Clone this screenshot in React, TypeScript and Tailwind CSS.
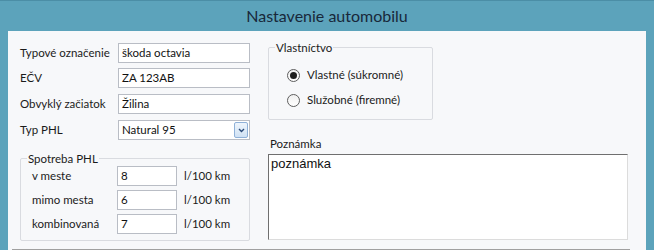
import React from 'react';

const FONT = { fontFamily: 'Lato, "Liberation Sans", sans-serif' };

function TextBox({ value, width }: { value: string; width: string }) {
  return (
    <div
      className={`${width} flex h-[20px] items-center border border-[#b9bdc5] bg-white pl-[3px] text-[11.5px] text-[#111]`}>
      {value}
    </div>
  );
}

function FieldRow({ label, children }: { label: string; children: React.ReactNode }) {
  return (
    <div className="flex h-[20px] items-center">
      <span className="w-[98px] text-[11.5px] text-[#1b1b1b]">{label}</span>
      {children}
    </div>
  );
}

function ComboBox({ value }: { value: string }) {
  return (
    <div className="flex h-[20px] w-[132px] items-center justify-between border border-[#b9bdc5] bg-white pl-[3px] pr-[1px] text-[11.5px] text-[#111]">
      <span>{value}</span>
      <span className="flex h-[16px] w-[14px] items-center justify-center rounded-[2px] border border-[#8fb1d8] bg-gradient-to-b from-[#eef5fc] to-[#cfe1f4]">
        <svg width="7" height="5" viewBox="0 0 7 5">
          <path d="M1 1 L3.5 3.5 L6 1" fill="none" stroke="#2a4a78" strokeWidth="1.4" />
        </svg>
      </span>
    </div>
  );
}

function ConsumptionRow({ label, value }: { label: string; value: string }) {
  return (
    <div className="flex h-[20px] items-center">
      <span className="w-[96px] pl-[11px] text-[11.5px] text-[#1b1b1b]">{label}</span>
      <TextBox value={value} width="w-[60px]" />
      <span className="ml-[7px] text-[11.5px] text-[#1b1b1b]">l/100 km</span>
    </div>
  );
}

function Radio({ label, checked }: { label: string; checked?: boolean }) {
  return (
    <div className="flex h-[14px] items-center">
      <span className="flex h-[13px] w-[13px] items-center justify-center rounded-full border border-[#5e5e5e] bg-gradient-to-b from-[#f0f0f0] to-[#ffffff]">
        {checked && <span className="h-[7px] w-[7px] rounded-full bg-[#1e1e1e]" />}
      </span>
      <span className="ml-[7px] text-[11.5px] text-[#1b1b1b]">{label}</span>
    </div>
  );
}

function GroupTitle({ text }: { text: string }) {
  return (
    <span className="-mt-[8px] ml-[6px] block w-fit bg-[#f7f8fa] px-[1px] text-[11.5px] leading-[16px] text-[#1b1b1b]">
      {text}
    </span>
  );
}

export default function App() {
  return (
    <div className="flex h-[250px] w-[654px] flex-col overflow-hidden bg-[#5ca3bb]" style={FONT}>
      {/* Titulok okna */}
      <div className="flex h-[31px] shrink-0 items-center justify-center border-t border-[#4b8ea6] text-[16px] text-[#18283a]">
        Nastavenie automobilu
      </div>

      <div className="mx-[8px] flex-1 bg-[#f7f8fa] pt-[12px]">
        <div className="flex">
          {/* Ľavý stĺpec */}
          <div className="ml-[12px] flex w-[230px] flex-col">
            <FieldRow label="Typové označenie">
              <TextBox value="škoda octavia" width="w-[132px]" />
            </FieldRow>
            <div className="mt-[5px]">
              <FieldRow label="EČV">
                <TextBox value="ZA 123AB" width="w-[132px]" />
              </FieldRow>
            </div>
            <div className="mt-[6px]">
              <FieldRow label="Obvyklý začiatok">
                <TextBox value="Žilina" width="w-[132px]" />
              </FieldRow>
            </div>
            <div className="mt-[6px]">
              <FieldRow label="Typ PHL">
                <ComboBox value="Natural 95" />
              </FieldRow>
            </div>

            <div className="mt-[18px] flex flex-col rounded-[2px] border border-[#d9dbe0] pb-[6px]">
              <GroupTitle text="Spotreba PHL" />
              <div className="-mt-[1px] flex flex-col gap-[4px]">
                <ConsumptionRow label="v meste" value="8" />
                <ConsumptionRow label="mimo mesta" value="6" />
                <ConsumptionRow label="kombinovaná" value="7" />
              </div>
            </div>
          </div>

          {/* Pravý stĺpec */}
          <div className="ml-[18px] flex w-[361px] flex-col">
            <div className="mt-[4px] flex h-[73px] w-[165px] flex-col rounded-[2px] border border-[#d9dbe0]">
              <GroupTitle text="Vlastníctvo" />
              <div className="ml-[18px] mt-[12px] flex flex-col gap-[11px]">
                <Radio label="Vlastné (súkromné)" checked />
                <Radio label="Služobné (firemné)" />
              </div>
            </div>
            <span className="ml-[2px] mt-[16px] text-[11.5px] leading-[16px] text-[#1b1b1b]">Poznámka</span>
            <div
              className="mt-[2px] h-[86px] w-[360px] border border-b-[#dcdcdc] border-l-[#6f6f6f] border-r-[#dcdcdc] border-t-[#6f6f6f] bg-white pl-[2px] text-[13px] leading-[18px] text-[#111]"
              style={{ fontFamily: '"Liberation Sans", sans-serif' }}>
              poznámka
            </div>
          </div>
        </div>

        <div className="ml-[4px] mr-[16px] mt-[8px] h-[4px] border-t border-[#a0a0a0]" />
      </div>
    </div>
  );
}
